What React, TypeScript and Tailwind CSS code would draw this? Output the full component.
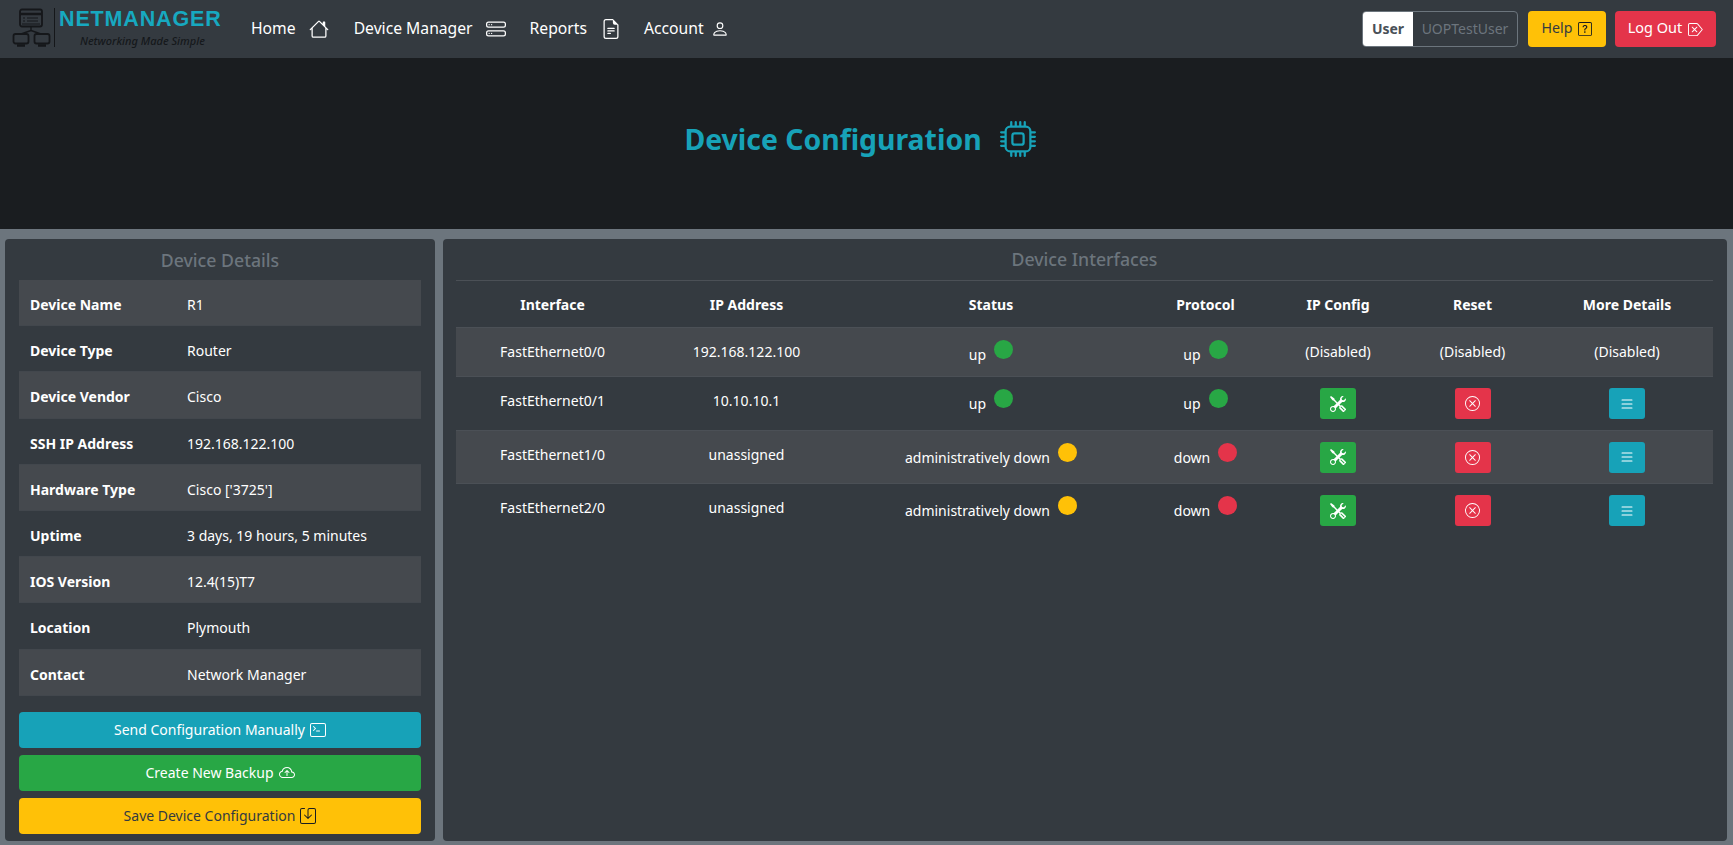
import type { ReactNode } from "react";
import {
  BsBackspaceReverse,
  BsCloudArrowUp,
  BsCpu,
  BsFileEarmarkText,
  BsHddStack,
  BsHouse,
  BsList,
  BsPerson,
  BsQuestionSquare,
  BsSave,
  BsTerminal,
  BsTools,
  BsXCircle,
} from "react-icons/bs";

const details = [
  ["Device Name", "R1"],
  ["Device Type", "Router"],
  ["Device Vendor", "Cisco"],
  ["SSH IP Address", "192.168.122.100"],
  ["Hardware Type", "Cisco ['3725']"],
  ["Uptime", "3 days, 19 hours, 5 minutes"],
  ["IOS Version", "12.4(15)T7"],
  ["Location", "Plymouth"],
  ["Contact", "Network Manager"],
];

const cols = "grid grid-cols-[193px_195px_294px_135px_130px_139px_170px] items-center text-center";

function Logo() {
  return (
    <div className="flex w-[221px] shrink-0 items-start">
      <svg width="42" height="40" viewBox="0 0 42 40" className="ml-[12px] mt-[8px] shrink-0" fill="none" stroke="#15171a" strokeWidth="1.8">
        <rect x="8" y="1.500" width="22" height="17" rx="2" />
        <path d="M8 6h22" strokeWidth="2.500" />
        <path d="M11 10h2M15 10h11M11 13h2M15 13h11M10 16h18" strokeWidth="1.200" />
        <path d="M19 18.500v4M19 22.500L9 26M19 22.500L29 26" strokeWidth="1.400" />
        <rect x="1.500" y="26" width="15" height="9.500" rx="2" />
        <rect x="22.500" y="26" width="15" height="9.500" rx="2" />
        <path d="M5 37.500h8M26 37.500h8" strokeWidth="2.500" />
      </svg>
      <div className="mt-[8px] h-[39px] w-px shrink-0 bg-[#15171a]" />
      <div className="ml-[4px] flex flex-col">
        <span className="mt-[7px] text-[21.5px] leading-[24px] font-bold tracking-[0.85px] text-[#17a9c0] font-['Liberation_Sans',sans-serif]">NETMANAGER</span>
        <span className="ml-[21px] mt-[3px] text-[11px] leading-[14px] font-medium italic text-[#15181b] whitespace-nowrap">Networking Made Simple</span>
      </div>
    </div>
  );
}

function NavLink({ label, icon, className }: { label: string; icon: ReactNode; className: string }) {
  return (
    <a className={`flex items-center whitespace-nowrap text-[15.7px] text-white ${className}`}>
      {label}
      {icon}
    </a>
  );
}

function Status({ text, color }: { text: string; color: string }) {
  return (
    <div className="flex items-start justify-center self-start">
      <span className="mt-[16px]">{text}</span>
      <span className={`ml-[8px] mt-[12px] inline-block size-[19px] rounded-full ${color}`} />
    </div>
  );
}

function IconButton({ color, children }: { color: string; children: ReactNode }) {
  return (
    <button className={`mx-auto flex h-[31px] w-[36px] items-center justify-center rounded-[3px] text-white ${color}`}>
      {children}
    </button>
  );
}

function WideButton({ color, children }: { color: string; children: ReactNode }) {
  return (
    <button className={`flex h-[36px] w-full items-center justify-center gap-[5px] rounded-[4px] text-[14px] ${color}`}>
      {children}
    </button>
  );
}

function InterfaceRow({
  name,
  ip,
  status,
  statusColor,
  protocol,
  protocolColor,
  height,
  striped,
  disabled,
  last,
}: {
  name: string;
  ip: string;
  status: string;
  statusColor: string;
  protocol: string;
  protocolColor: string;
  height: string;
  striped?: boolean;
  disabled?: boolean;
  last?: boolean;
}) {
  return (
    <div className={`${cols} ${height} ${last ? "" : "border-b border-[#4b5056]"} ${striped ? "bg-[#45494e]" : ""}`}>
      <div className="self-start pt-[13px]">{name}</div>
      <div className="self-start pt-[13px]">{ip}</div>
      <Status text={status} color={statusColor} />
      <Status text={protocol} color={protocolColor} />
      {disabled ? (
        <>
          <div className="pb-[2px]">(Disabled)</div>
          <div className="pb-[2px]">(Disabled)</div>
          <div className="pb-[2px]">(Disabled)</div>
        </>
      ) : (
        <>
          <IconButton color="bg-[#28a745]"><BsTools size={16} /></IconButton>
          <IconButton color="bg-[#e4344a]"><BsXCircle size={15} /></IconButton>
          <IconButton color="bg-[#17a2b8]"><BsList size={16} /></IconButton>
        </>
      )}
    </div>
  );
}

export default function App() {
  return (
    <div className="flex h-screen flex-col overflow-hidden bg-[#6c757d] font-['Noto_Sans',sans-serif] text-[14px] text-white">
      {/* Navbar */}
      <nav className="flex h-[58px] shrink-0 items-center bg-[#343a40]">
        <div className="h-full"><Logo /></div>
        <NavLink className="ml-[30px]" label="Home" icon={<BsHouse size={20} className="ml-[13px]" />} />
        <NavLink className="ml-[25px]" label="Device Manager" icon={<BsHddStack size={20} className="ml-[13px]" />} />
        <NavLink className="ml-[24px]" label="Reports" icon={<BsFileEarmarkText size={20} className="ml-[14px]" />} />
        <NavLink className="ml-[23px]" label="Account" icon={<BsPerson size={18} className="ml-[7px]" />} />
        <div className="ml-auto mr-[17px] flex items-center">
          <div className="flex h-[36px] w-[156px] overflow-hidden rounded-[4px] border border-[#6c757d] text-[14px]">
            <span className="flex w-[50px] items-center justify-center bg-white pb-[1px] font-bold text-[#495057]">User</span>
            <span className="flex flex-1 items-center justify-center pb-[1px] text-[#6c757d]">UOPTestUser</span>
          </div>
          <button className="ml-[10px] flex h-[36px] w-[78px] items-center justify-center gap-[6px] rounded-[4px] bg-[#ffc107] pb-[2px] text-[14.2px] text-[#343a40]">
            Help <BsQuestionSquare size={14} className="mt-[2px] text-[#1a1d20]" />
          </button>
          <button className="ml-[9px] flex h-[36px] w-[101px] items-center justify-center gap-[6px] rounded-[4px] bg-[#e4344a] pb-[2px] text-[14.5px]">
            Log Out <BsBackspaceReverse size={15} className="mt-[2px]" />
          </button>
        </div>
      </nav>

      {/* Hero */}
      <header className="flex h-[171px] shrink-0 items-center justify-center bg-[#1a1d20] pb-[9px] pr-[13px] text-[#17a2b8]">
        <h1 className="text-[28.4px] font-bold">Device Configuration</h1>
        <BsCpu size={36} className="ml-[18px]" />
      </header>

      {/* Panels */}
      <main className="flex min-h-0 flex-1 gap-[8px] pb-[4px] pl-[5px] pr-[6px] pt-[10px]">
        <section className="flex w-[430px] shrink-0 flex-col rounded-[4px] bg-[#343a40] px-[14px]">
          <h2 className="flex h-[41px] shrink-0 items-center justify-center pt-[2px] text-[17.7px] font-medium text-[#6c757d]">Device Details</h2>
          <div>
            {details.map(([label, value], i) => (
              <div key={label} className={`flex h-[46.2px] items-center border-b border-[#42474d] pt-[4px] ${i % 2 === 0 ? "bg-[#45494e]" : ""}`}>
                <span className="w-[168px] pl-[11px] font-bold">{label}</span>
                <span>{value}</span>
              </div>
            ))}
          </div>
          <div className="mt-[16px] flex flex-col gap-[7px]">
            <WideButton color="bg-[#17a2b8] text-white">Send Configuration Manually <BsTerminal size={16} /></WideButton>
            <WideButton color="bg-[#28a745] text-white">Create New Backup <BsCloudArrowUp size={16} /></WideButton>
            <WideButton color="bg-[#ffc107] text-[#343a40]">Save Device Configuration <BsSave size={16} className="text-[#1a1d20]" /></WideButton>
          </div>
        </section>

        <section className="min-w-0 flex-1 rounded-[4px] bg-[#343a40] pl-[13px] pr-[14px]">
          <h2 className="flex h-[42px] items-center justify-center border-b border-[#4b5056] text-[17.7px] font-medium text-[#6c757d]">Device Interfaces</h2>
          <div className={`${cols} h-[47px] border-b border-[#4b5056] font-bold`}>
            <div>Interface</div>
            <div>IP Address</div>
            <div>Status</div>
            <div>Protocol</div>
            <div>IP Config</div>
            <div>Reset</div>
            <div>More Details</div>
          </div>
          <InterfaceRow name="FastEthernet0/0" ip="192.168.122.100" status="up" statusColor="bg-[#28a745]" protocol="up" protocolColor="bg-[#28a745]" height="h-[49px]" striped disabled />
          <InterfaceRow name="FastEthernet0/1" ip="10.10.10.1" status="up" statusColor="bg-[#28a745]" protocol="up" protocolColor="bg-[#28a745]" height="h-[54px]" />
          <InterfaceRow name="FastEthernet1/0" ip="unassigned" status="administratively down" statusColor="bg-[#ffc107]" protocol="down" protocolColor="bg-[#e4344a]" height="h-[53px]" striped />
          <InterfaceRow name="FastEthernet2/0" ip="unassigned" status="administratively down" statusColor="bg-[#ffc107]" protocol="down" protocolColor="bg-[#e4344a]" height="h-[53px]" last />
        </section>
      </main>
    </div>
  );
}
